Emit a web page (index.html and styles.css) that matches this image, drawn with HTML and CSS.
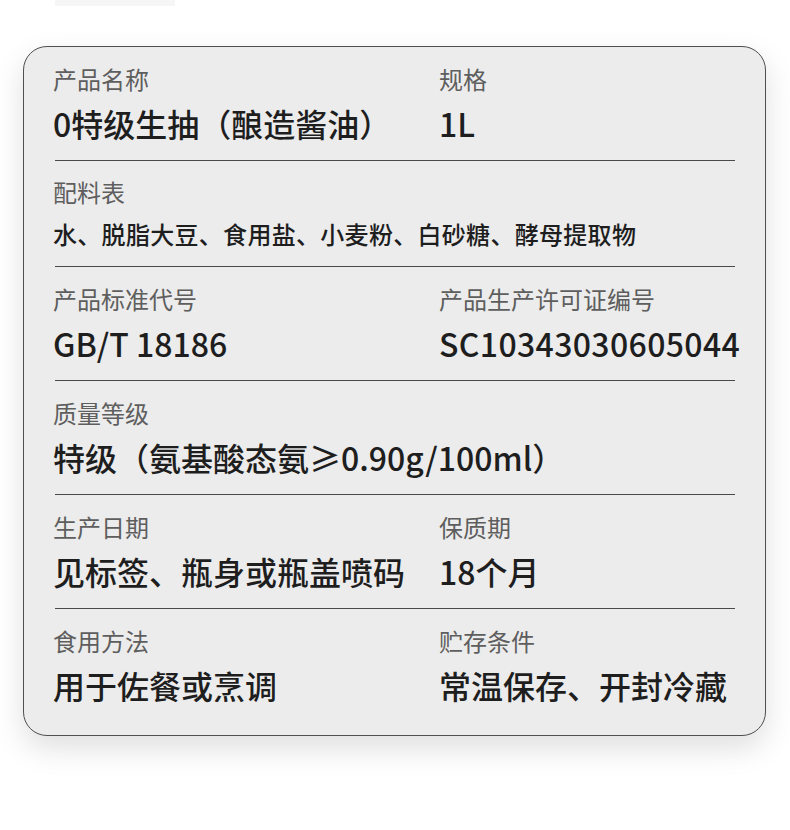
FILE: index.html
```html
<!DOCTYPE html>
<html lang="zh-CN">
<head>
<meta charset="utf-8">
<title>产品信息</title>
<link rel="stylesheet" href="styles.css">
</head>
<body>
<div class="page">
  <div class="ghost"></div>
  <section class="card">
    <div class="row two">
      <div class="cell"><div class="label">产品名称</div><div class="value">0特级生抽（酿造酱油）</div></div>
      <div class="cell"><div class="label">规格</div><div class="value">1L</div></div>
    </div>
    <div class="row list">
      <div class="cell"><div class="label">配料表</div><div class="value small">水、脱脂大豆、食用盐、小麦粉、白砂糖、酵母提取物</div></div>
    </div>
    <div class="row two">
      <div class="cell"><div class="label">产品标准代号</div><div class="value">GB/T 18186</div></div>
      <div class="cell"><div class="label">产品生产许可证编号</div><div class="value code">SC10343030605044</div></div>
    </div>
    <div class="row">
      <div class="cell"><div class="label">质量等级</div><div class="value">特级（氨基酸态氨≥0.90g/100ml）</div></div>
    </div>
    <div class="row two">
      <div class="cell"><div class="label">生产日期</div><div class="value">见标签、瓶身或瓶盖喷码</div></div>
      <div class="cell"><div class="label">保质期</div><div class="value">18个月</div></div>
    </div>
    <div class="row two last">
      <div class="cell"><div class="label">食用方法</div><div class="value">用于佐餐或烹调</div></div>
      <div class="cell"><div class="label">贮存条件</div><div class="value">常温保存、开封冷藏</div></div>
    </div>
  </section>
</div>
</body>
</html>
```
FILE: styles.css
```css
html, body {
  margin: 0;
  padding: 0;
  background: #ffffff;
}
body {
  font-family: "Noto Sans CJK SC", "Noto Sans", sans-serif;
  width: 790px;
  height: 830px;
  overflow: hidden;
}
.ghost {
  width: 120px;
  height: 6px;
  margin-left: 55px;
  background: #f6f6f6;
}
.card {
  box-sizing: border-box;
  width: 743px;
  height: 690px;
  margin: 40px 0 0 23px;
  padding: 0 30px 13px 29px;
  background: #ececec;
  border: 1px solid #4f4f4f;
  border-radius: 24px;
  box-shadow: 0 12px 30px rgba(0, 0, 0, 0.13);
}
.row {
  padding: 17px 0 18px;
  background: linear-gradient(#4a4a4a, #4a4a4a) 2px 100% / calc(100% - 2px) 1px no-repeat;
}
.row.list {
  padding: 16px 0 17px;
}
.row.list .label {
  margin-bottom: 11px;
}
.row.last {
  background: none;
}
.two {
  display: grid;
  grid-template-columns: 386px 1fr;
}
.label {
  font-size: 24px;
  line-height: 30px;
  color: #5e5e5e;
  margin-bottom: 9px;
  white-space: nowrap;
}
.value {
  font-size: 32px;
  line-height: 40px;
  font-weight: 500;
  color: #1e1e1e;
  white-space: nowrap;
}
.value.small {
  font-size: 24px;
  line-height: 32px;
  letter-spacing: 0.3px;
}
.value.code {
  letter-spacing: 0.35px;
}
```
